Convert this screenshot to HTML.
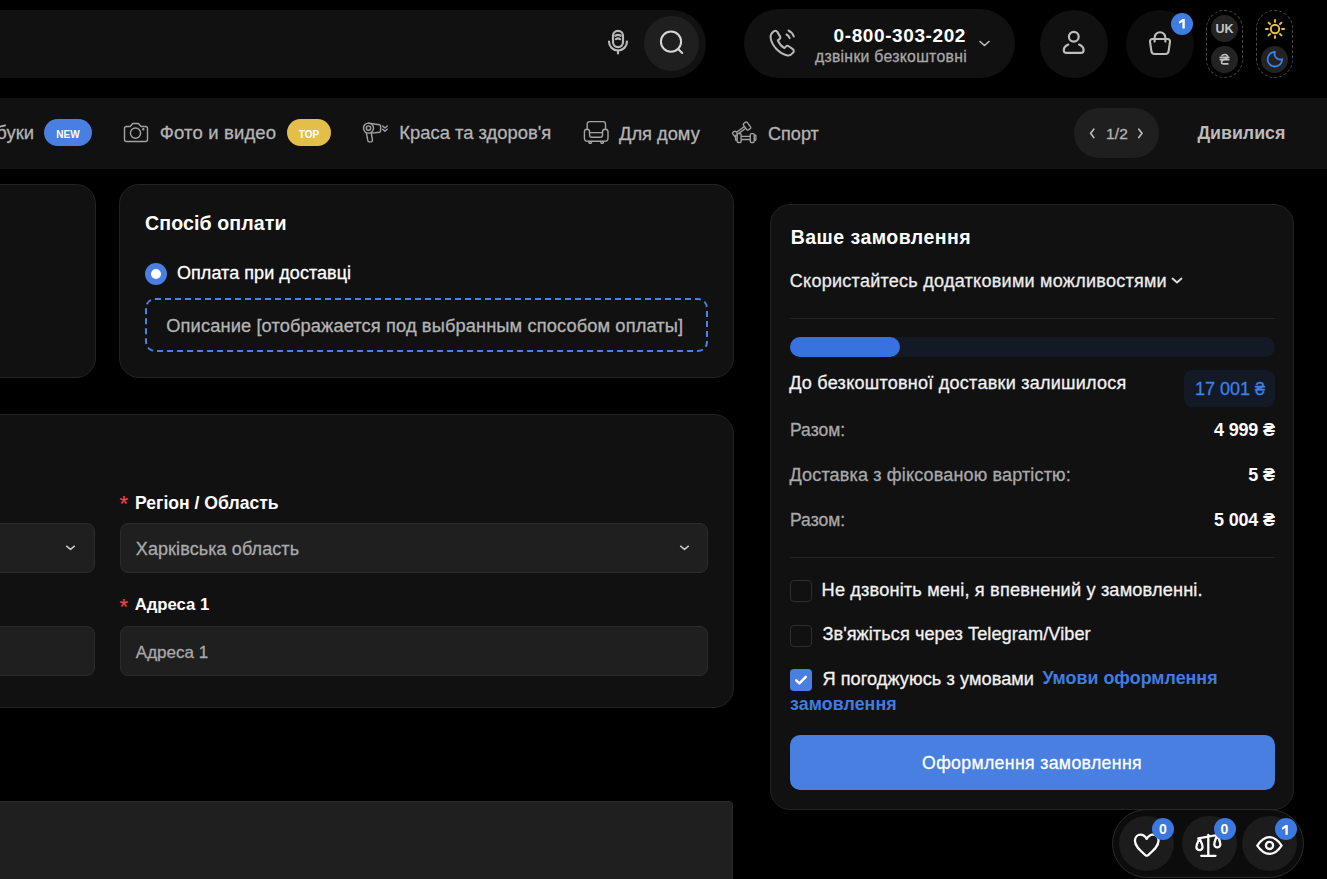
<!DOCTYPE html>
<html><head><meta charset="utf-8"><title>Checkout</title>
<style>
html,body{margin:0;padding:0;background:#000;}
body{width:1327px;height:879px;overflow:hidden;position:relative;font-family:"Liberation Sans", sans-serif;}
</style></head><body>
<div style="position:absolute;left:-300px;top:10px;width:1006px;height:68px;background:#111111;border-radius:34px;box-sizing:border-box;"></div>
<svg style="position:absolute;left:604px;top:27px;" width="28" height="30" viewBox="0 0 28 30" fill="none"><g stroke="#b9b9b9" stroke-width="2.2" stroke-linecap="round">
<rect x="9" y="3.8" width="10" height="16.3" rx="5"/>
<path d="M5 14.5a9 9 0 0 0 18 0"/>
<path d="M14 23.5v3"/>
<path d="M11.3 8.7q2.7-1.6 5.4 0"/>
<path d="M12 12.1q2-1.3 4 0"/></g></svg>
<div style="position:absolute;left:644.0px;top:16.0px;width:55px;height:55px;background:#1f1f1f;border-radius:50%;"></div>
<svg style="position:absolute;left:656px;top:28px;" width="32" height="32" viewBox="0 0 32 32" fill="none"><g stroke="#d6d6d6" stroke-width="2" stroke-linecap="round">
<circle cx="15" cy="13.6" r="10.1"/><path d="M22.6 21.6l3.6 3.4"/></g></svg>
<div style="position:absolute;left:744px;top:9px;width:271px;height:69px;background:#111111;border-radius:34.5px;box-sizing:border-box;"></div>
<svg style="position:absolute;left:768px;top:27.5px;" width="32" height="30" viewBox="0 0 32 30" fill="none"><g stroke="#b9b9b9" stroke-width="2" stroke-linecap="round" stroke-linejoin="round">
<path d="M5.5 3.5c1.5-1 3-.8 3.8.4l2.6 4.2c.6 1 .4 2.3-.5 3l-1.6 1.3c1.2 3 3.6 6 6.6 7.7l1.4-1.5c.8-.9 2.1-1 3-.3l4 2.8c1.2.8 1.3 2.4.3 3.6-1.5 1.8-3.4 3.3-5.6 2.8C11 25.6 3.5 17.3 2.6 9.5c-.3-2.4 1.2-4.6 2.9-6z"/>
<path d="M18.5 6.5c1.6.8 2.6 2 3.2 3.6"/><path d="M20.5 2.5c2.8 1.3 4.4 3.3 5.3 6"/></g></svg>
<div style="position:absolute;right:361px;top:25.5px;font-size:19px;line-height:19px;font-weight:700;color:#ffffff;letter-spacing:0.6px;white-space:nowrap;">0-800-303-202</div>
<div style="position:absolute;right:360px;top:49px;font-size:15.8px;line-height:15.8px;font-weight:400;color:#a8a8a8;letter-spacing:0.28px;white-space:nowrap;-webkit-text-stroke:0.3px #a8a8a8;">дзвінки безкоштовні</div>
<svg style="position:absolute;left:978px;top:39px;" width="13" height="9" viewBox="0 0 13 9" fill="none"><path d="M2 2.5l4.5 4 4.5-4" stroke="#bdbdbd" stroke-width="1.6" stroke-linecap="round" stroke-linejoin="round"/></svg>
<div style="position:absolute;left:1039.5px;top:10.0px;width:68px;height:68px;background:#111111;border-radius:50%;"></div>
<svg style="position:absolute;left:1060px;top:30px;" width="28" height="28" viewBox="0 0 28 28" fill="none"><g stroke="#bdbdbd" stroke-width="2.2" stroke-linecap="round">
<circle cx="13.8" cy="6.8" r="4.9"/>
<path d="M8.3 14.6c-2.8 1.3-4.5 3.3-4.5 5.6 0 1.6 1 2.6 2.6 2.6h14.6c1.6 0 2.6-1 2.6-2.6 0-2.3-1.7-4.3-4.5-5.6"/></g></svg>
<div style="position:absolute;left:1125.5px;top:10.0px;width:68px;height:68px;background:#0d0d0d;border-radius:50%;"></div>
<svg style="position:absolute;left:1146px;top:29px;" width="28" height="28" viewBox="0 0 28 28" fill="none"><g stroke="#bdbdbd" stroke-width="2.1" stroke-linecap="round" stroke-linejoin="round">
<path d="M6.3 10h15.4c1.5 0 2.5 1.3 2.3 2.7l-1.4 9.4c-.2 1.7-1.6 2.9-3.3 2.9H8.7c-1.7 0-3.1-1.2-3.3-2.9L4 12.7C3.8 11.3 4.8 10 6.3 10z"/>
<path d="M8.6 12.6V8.6a5.4 5.4 0 0 1 10.8 0v4"/></g></svg>
<div style="position:absolute;left:1171.0px;top:13.0px;width:22px;height:22px;background:#3f7de0;border-radius:50%;"></div>
<svg style="position:absolute;left:1177.5px;top:18.4px;" width="9" height="11.4" viewBox="0 0 9 11.4" fill="none"><path d="M4.4 1H6.800000000000001V10.4H4.4V3.82L1.5 5.7L0.8 3.82Z" fill="#fff"/></svg>
<div style="position:absolute;left:1206px;top:10px;width:37px;height:68px;background:transparent;border-radius:18.5px;border:1px dashed #4a4a4a;box-sizing:border-box;"></div>
<div style="position:absolute;left:1211.0px;top:15.0px;width:27px;height:27px;background:#232323;border-radius:50%;"></div>
<div style="position:absolute;left:924.5px;width:600px;text-align:center;top:23px;font-size:12.5px;line-height:12.5px;font-weight:700;color:#c4c4c4;letter-spacing:0px;white-space:nowrap;">UK</div>
<div style="position:absolute;left:1211.0px;top:45.5px;width:27px;height:27px;background:#232323;border-radius:50%;"></div>
<svg style="position:absolute;left:1219px;top:53px;" width="11" height="12" viewBox="0 0 11 12" fill="none"><g stroke="#c4c4c4" stroke-width="1.6" stroke-linecap="round" stroke-linejoin="round" fill="none"><path d="M3 2.4Q5.2 1.1 7.2 1.7Q8.9 2.3 8.6 4Q8.2 5.4 5.6 6.3Q2.6 7.3 2.5 9.2Q2.6 10.9 4.8 10.9H8.9"/><path d="M1.2 4.4H9.9M1.2 6.6H9.9"/></g></svg>
<div style="position:absolute;left:1256px;top:10px;width:37px;height:68px;background:transparent;border-radius:18.5px;border:1px dashed #4a4a4a;box-sizing:border-box;"></div>
<svg style="position:absolute;left:1263px;top:17px;" width="24" height="24" viewBox="0 0 24 24" fill="none"><g stroke="#e9c43f" stroke-width="1.9" stroke-linecap="round">
<circle cx="12" cy="12" r="4.2"/>
<path d="M12 2.9v2M12 19.1v2M2.9 12h2M19.1 12h2M5.6 5.6l1.4 1.4M17 17l1.4 1.4M5.6 18.4L7 17M17 7l1.4-1.4"/></g></svg>
<div style="position:absolute;left:1261.0px;top:45.5px;width:27px;height:27px;background:#232323;border-radius:50%;"></div>
<svg style="position:absolute;left:1264px;top:49px;" width="21" height="21" viewBox="0 0 21 21" fill="none"><path d="M10.9 2.9A7.3 7.3 0 1 0 18.2 10.2A5.7 5.7 0 0 1 10.9 2.9Z" stroke="#3b82f0" stroke-width="1.8" stroke-linejoin="round"/></svg>
<div style="position:absolute;left:0px;top:98px;width:1327px;height:71px;background:#111111;border-radius:0px;box-sizing:border-box;"></div>
<div style="position:absolute;right:1293px;top:124px;font-size:18.4px;line-height:18.4px;font-weight:400;color:#b4b4b4;letter-spacing:0px;white-space:nowrap;-webkit-text-stroke:0.3px #b4b4b4;">буки</div>
<div style="position:absolute;left:44px;top:119px;width:48px;height:27px;background:#487fe1;border-radius:13.5px;box-sizing:border-box;"></div>
<div style="position:absolute;left:-232px;width:600px;text-align:center;top:129.5px;font-size:10px;line-height:10px;font-weight:700;color:#fff;letter-spacing:0px;white-space:nowrap;">NEW</div>
<svg style="position:absolute;left:122px;top:120px;" width="28" height="24" viewBox="0 0 28 24" fill="none"><g stroke="#a3a3a3" stroke-width="1.4" stroke-linejoin="round">
<path d="M2.5 8.5a2 2 0 0 1 2-2h3.6l2.7-3h5.6l2.7 3h4.4a2 2 0 0 1 2 2v11a2 2 0 0 1-2 2h-19a2 2 0 0 1-2-2z"/>
<circle cx="13.5" cy="13.1" r="5.1"/><circle cx="21.3" cy="9.2" r=".5" fill="#a3a3a3"/></g></svg>
<div style="position:absolute;left:159.8px;top:124px;font-size:18.5px;line-height:18.5px;font-weight:400;color:#b4b4b4;letter-spacing:0.15px;white-space:nowrap;-webkit-text-stroke:0.3px #b4b4b4;">Фото и видео</div>
<div style="position:absolute;left:287px;top:119px;width:44px;height:27px;background:#e3bf4a;border-radius:13.5px;box-sizing:border-box;"></div>
<div style="position:absolute;left:9px;width:600px;text-align:center;top:129.5px;font-size:10px;line-height:10px;font-weight:700;color:#fff;letter-spacing:0px;white-space:nowrap;">TOP</div>
<svg style="position:absolute;left:361px;top:121px;" width="28" height="23" viewBox="0 0 28 23" fill="none"><g stroke="#a3a3a3" stroke-width="1.4" stroke-linecap="round" stroke-linejoin="round">
<circle cx="7.5" cy="7.1" r="5"/><circle cx="7.5" cy="7.1" r="2.2"/>
<path d="M7.5 2.1L18.4 3.7Q19.6 3.9 19.6 5V10Q19.6 11 18.5 11.2L11 12.1"/>
<path d="M5.3 11.6L6.9 19.8Q7.2 21 8.4 20.9L10.4 20.7Q11.7 20.5 11.5 19.2L10.3 12.3"/>
<path d="M21.6 5L23.9 7L26.2 5M21.6 8.2L23.9 10.2L26.2 8.2"/></g></svg>
<div style="position:absolute;left:399.3px;top:124px;font-size:18.4px;line-height:18.4px;font-weight:400;color:#b4b4b4;letter-spacing:0px;white-space:nowrap;-webkit-text-stroke:0.3px #b4b4b4;">Краса та здоров'я</div>
<svg style="position:absolute;left:582px;top:120px;" width="28" height="25" viewBox="0 0 28 25" fill="none"><g stroke="#a3a3a3" stroke-width="1.4" stroke-linecap="round" stroke-linejoin="round">
<path d="M5.2 8.8V4Q5.2 1.6 7.6 1.6H21.1Q23.5 1.6 23.5 4V8.8"/>
<path d="M5 9.3Q7.6 9.3 7.6 12V15Q7.6 17.3 9.9 17.3H18.2Q20.5 17.3 20.5 15V12Q20.5 9.3 23.2 9.3Q26 9.3 26 12V18Q26 21.3 22.7 21.3H5.7Q2.4 21.3 2.4 18V12Q2.4 9.3 5 9.3Z"/>
<path d="M7.6 12.6H20.5"/>
<path d="M6.6 21.5L7.3 23.3H9.1L9.8 21.5M18.6 21.5L19.3 23.3H21.1L21.8 21.5"/></g></svg>
<div style="position:absolute;left:619px;top:125px;font-size:18.3px;line-height:18.3px;font-weight:400;color:#b4b4b4;letter-spacing:0px;white-space:nowrap;-webkit-text-stroke:0.3px #b4b4b4;">Для дому</div>
<svg style="position:absolute;left:730px;top:120px;" width="30" height="25" viewBox="0 0 30 25" fill="none"><g stroke="#a3a3a3" stroke-width="1.3" stroke-linecap="round" stroke-linejoin="round">
<g transform="translate(11.5 10) rotate(-36)">
<path d="M-5.5 -1.1H4.5M-5.5 1.1H4.5"/>
<rect x="4.5" y="-4" width="4.6" height="8" rx="1.2" fill="#111"/>
<rect x="-9.3" y="-3.1" width="3.8" height="6.2" rx="1" fill="#111"/></g>
<path d="M11.1 16.3H20.3M11.1 19.5H20.3"/>
<rect x="5.6" y="15.2" width="1.8" height="5.2" rx=".6" fill="#111"/>
<rect x="24.1" y="15.2" width="1.8" height="5.2" rx=".6" fill="#111"/>
<rect x="7.2" y="13.7" width="3.9" height="8.8" rx="1" fill="#111"/>
<rect x="20.3" y="13.7" width="3.9" height="8.8" rx="1" fill="#111"/></g></svg>
<div style="position:absolute;left:768px;top:125px;font-size:18.1px;line-height:18.1px;font-weight:400;color:#b4b4b4;letter-spacing:0px;white-space:nowrap;-webkit-text-stroke:0.3px #b4b4b4;">Спорт</div>
<div style="position:absolute;left:1074px;top:108px;width:85px;height:50px;background:#1f1f1f;border-radius:25px;box-sizing:border-box;"></div>
<svg style="position:absolute;left:1086px;top:124px;" width="10" height="16" viewBox="0 0 10 16" fill="none"><path d="M7.8 5.2L4.6 9.3 7.8 13.5" stroke="#b9b9b9" stroke-width="1.7" stroke-linecap="round" stroke-linejoin="round"/></svg>
<div style="position:absolute;left:1106px;top:125.5px;font-size:15.5px;line-height:15.5px;font-weight:400;color:#b4b4b4;letter-spacing:0.2px;white-space:nowrap;-webkit-text-stroke:0.3px #b4b4b4;">1/2</div>
<svg style="position:absolute;left:1134px;top:124px;" width="10" height="16" viewBox="0 0 10 16" fill="none"><path d="M4.8 5.2L8 9.3 4.8 13.5" stroke="#b9b9b9" stroke-width="1.7" stroke-linecap="round" stroke-linejoin="round"/></svg>
<div style="position:absolute;left:1197.4px;top:125px;font-size:17.8px;line-height:17.8px;font-weight:700;color:#bcbcbc;letter-spacing:0px;white-space:nowrap;">Дивилися</div>
<div style="position:absolute;left:-200px;top:184px;width:296px;height:194px;background:#111111;border-radius:20px;border:1px solid #232323;box-sizing:border-box;"></div>
<div style="position:absolute;left:119px;top:184px;width:615px;height:194px;background:#111111;border-radius:20px;border:1px solid #232323;box-sizing:border-box;"></div>
<div style="position:absolute;left:145px;top:214px;font-size:19.6px;line-height:19.6px;font-weight:700;color:#ffffff;letter-spacing:0.1px;white-space:nowrap;">Спосіб оплати</div>
<div style="position:absolute;left:145.0px;top:263.2px;width:22px;height:22px;background:#487fe1;border-radius:50%;"></div>
<div style="position:absolute;left:151.0px;top:269.0px;width:10px;height:10px;background:#ffffff;border-radius:50%;"></div>
<div style="position:absolute;left:177px;top:264px;font-size:18px;line-height:18px;font-weight:400;color:#ffffff;letter-spacing:0.05px;white-space:nowrap;-webkit-text-stroke:0.3px #ffffff;">Оплата при доставці</div>
<div style="position:absolute;left:145px;top:298px;width:563px;height:54px;background:transparent;border-radius:10px;border:2px dashed #4b84e6;box-sizing:border-box;"></div>
<div style="position:absolute;left:166.3px;top:317px;font-size:18.3px;line-height:18.3px;font-weight:400;color:#b4b4b4;letter-spacing:0.1px;white-space:nowrap;-webkit-text-stroke:0.3px #b4b4b4;">Описание [отображается под выбранным способом оплаты]</div>
<div style="position:absolute;left:-200px;top:414px;width:934px;height:294px;background:#111111;border-radius:20px;border:1px solid #232323;box-sizing:border-box;"></div>
<div style="position:absolute;left:119.5px;top:493px;font-size:22px;line-height:22px;font-weight:400;color:#ef4444;letter-spacing:0px;white-space:nowrap;-webkit-text-stroke:0.2px #ef4444;">*</div>
<div style="position:absolute;left:135px;top:495px;font-size:17.6px;line-height:17.6px;font-weight:700;color:#ffffff;letter-spacing:0px;white-space:nowrap;">Регіон / Область</div>
<div style="position:absolute;left:-200px;top:523px;width:295px;height:50px;background:#1f1f1f;border-radius:8px;border:1px solid #2b2b2b;box-sizing:border-box;"></div>
<svg style="position:absolute;left:64px;top:543px;" width="13" height="9" viewBox="0 0 13 9" fill="none"><path d="M2.6 3.2l3.9 3.2 3.9-3.2" stroke="#c9c9c9" stroke-width="1.5" stroke-linecap="round" stroke-linejoin="round"/></svg>
<div style="position:absolute;left:120px;top:523px;width:588px;height:50px;background:#1f1f1f;border-radius:8px;border:1px solid #2b2b2b;box-sizing:border-box;"></div>
<div style="position:absolute;left:135.8px;top:540px;font-size:18px;line-height:18px;font-weight:400;color:#a9a9a9;letter-spacing:0.1px;white-space:nowrap;-webkit-text-stroke:0.3px #a9a9a9;">Харківська область</div>
<svg style="position:absolute;left:678px;top:543px;" width="13" height="9" viewBox="0 0 13 9" fill="none"><path d="M2.6 3.2l3.9 3.2 3.9-3.2" stroke="#c9c9c9" stroke-width="1.5" stroke-linecap="round" stroke-linejoin="round"/></svg>
<div style="position:absolute;left:119.5px;top:596px;font-size:22px;line-height:22px;font-weight:400;color:#ef4444;letter-spacing:0px;white-space:nowrap;-webkit-text-stroke:0.2px #ef4444;">*</div>
<div style="position:absolute;left:134.7px;top:597px;font-size:16.7px;line-height:16.7px;font-weight:700;color:#ffffff;letter-spacing:0px;white-space:nowrap;">Адреса 1</div>
<div style="position:absolute;left:-200px;top:626px;width:295px;height:50px;background:#1f1f1f;border-radius:8px;border:1px solid #2b2b2b;box-sizing:border-box;"></div>
<div style="position:absolute;left:120px;top:626px;width:588px;height:50px;background:#1f1f1f;border-radius:8px;border:1px solid #2b2b2b;box-sizing:border-box;"></div>
<div style="position:absolute;left:135.8px;top:643.5px;font-size:17px;line-height:17px;font-weight:400;color:#a9a9a9;letter-spacing:0px;white-space:nowrap;-webkit-text-stroke:0.3px #a9a9a9;">Адреса 1</div>
<div style="position:absolute;left:-200px;top:801px;width:933px;height:200px;background:#1f1f1f;border-radius:4px;border:1px solid #2b2b2b;box-sizing:border-box;"></div>
<div style="position:absolute;left:770px;top:204px;width:524px;height:605.5px;background:#111111;border-radius:20px;border:1px solid #232323;box-sizing:border-box;"></div>
<div style="position:absolute;left:790.8px;top:228px;font-size:19.5px;line-height:19.5px;font-weight:700;color:#ffffff;letter-spacing:0.45px;white-space:nowrap;">Ваше замовлення</div>
<div style="position:absolute;left:789.8px;top:271.5px;font-size:18px;line-height:18px;font-weight:400;color:#ececec;letter-spacing:0.27px;white-space:nowrap;-webkit-text-stroke:0.3px #ececec;">Скористайтесь додатковими можливостями</div>
<svg style="position:absolute;left:1169px;top:274px;" width="16" height="12" viewBox="0 0 16 12" fill="none"><path d="M3.5 4.5l4.5 4 4.5-4" stroke="#e0e0e0" stroke-width="1.8" stroke-linecap="round" stroke-linejoin="round"/></svg>
<div style="position:absolute;left:790px;top:318px;width:485px;height:1px;background:#242424;border-radius:0px;box-sizing:border-box;"></div>
<div style="position:absolute;left:790px;top:337px;width:485px;height:20px;background:#131a26;border-radius:10px;box-sizing:border-box;"></div>
<div style="position:absolute;left:790px;top:337px;width:110px;height:20px;background:#3872e0;border-radius:10px;box-sizing:border-box;"></div>
<div style="position:absolute;left:789.2px;top:374px;font-size:18px;line-height:18px;font-weight:400;color:#f2f2f2;letter-spacing:0.26px;white-space:nowrap;-webkit-text-stroke:0.3px #f2f2f2;">До безкоштовної доставки залишилося</div>
<div style="position:absolute;left:1184px;top:370px;width:91px;height:36.5px;background:#131a26;border-radius:8px;box-sizing:border-box;"></div>
<div style="position:absolute;right:62px;top:380px;font-size:18px;line-height:18px;font-weight:400;color:#3d7fe6;letter-spacing:0px;white-space:nowrap;-webkit-text-stroke:0.3px #3d7fe6;">17 001 ₴</div>
<div style="position:absolute;left:790px;top:421.5px;font-size:17.5px;line-height:17.5px;font-weight:400;color:#a9a9a9;letter-spacing:0px;white-space:nowrap;-webkit-text-stroke:0.3px #a9a9a9;">Разом:</div>
<div style="position:absolute;right:52.299999999999955px;top:421px;font-size:18px;line-height:18px;font-weight:700;color:#ffffff;letter-spacing:-0.2px;white-space:nowrap;">4 999 ₴</div>
<div style="position:absolute;left:789.5px;top:466px;font-size:18px;line-height:18px;font-weight:400;color:#a9a9a9;letter-spacing:0.16px;white-space:nowrap;-webkit-text-stroke:0.3px #a9a9a9;">Доставка з фіксованою вартістю:</div>
<div style="position:absolute;right:52.299999999999955px;top:466px;font-size:18px;line-height:18px;font-weight:700;color:#ffffff;letter-spacing:-0.2px;white-space:nowrap;">5 ₴</div>
<div style="position:absolute;left:790px;top:512px;font-size:17.5px;line-height:17.5px;font-weight:400;color:#a9a9a9;letter-spacing:0px;white-space:nowrap;-webkit-text-stroke:0.3px #a9a9a9;">Разом:</div>
<div style="position:absolute;right:52.299999999999955px;top:511px;font-size:18px;line-height:18px;font-weight:700;color:#ffffff;letter-spacing:-0.2px;white-space:nowrap;">5 004 ₴</div>
<div style="position:absolute;left:790px;top:557px;width:485px;height:1px;background:#242424;border-radius:0px;box-sizing:border-box;"></div>
<div style="position:absolute;left:790px;top:580px;width:22px;height:22px;background:transparent;border-radius:4px;border:1px solid #2e2e2e;box-sizing:border-box;"></div>
<div style="position:absolute;left:821.6px;top:581px;font-size:18.2px;line-height:18.2px;font-weight:400;color:#f2f2f2;letter-spacing:0.15px;white-space:nowrap;-webkit-text-stroke:0.3px #f2f2f2;">Не дзвоніть мені, я впевнений у замовленні.</div>
<div style="position:absolute;left:790px;top:624.5px;width:22px;height:22px;background:transparent;border-radius:4px;border:1px solid #2e2e2e;box-sizing:border-box;"></div>
<div style="position:absolute;left:822.4px;top:625px;font-size:18.2px;line-height:18.2px;font-weight:400;color:#f2f2f2;letter-spacing:0.05px;white-space:nowrap;-webkit-text-stroke:0.3px #f2f2f2;">Зв'яжіться через Telegram/Viber</div>
<div style="position:absolute;left:790px;top:669px;width:22px;height:22px;background:#487fe1;border-radius:4px;box-sizing:border-box;"></div>
<svg style="position:absolute;left:790px;top:669px;" width="22" height="22" viewBox="0 0 22 22" fill="none"><path d="M6.2 11.3l3.2 3.1 6.4-6.6" stroke="#fff" stroke-width="2.4" stroke-linecap="round" stroke-linejoin="round"/></svg>
<div style="position:absolute;left:822.4px;top:670px;font-size:18.2px;line-height:18.2px;font-weight:400;color:#f2f2f2;letter-spacing:0.05px;white-space:nowrap;-webkit-text-stroke:0.3px #f2f2f2;">Я погоджуюсь з умовами</div>
<div style="position:absolute;left:1042.4px;top:670px;font-size:17.8px;line-height:17.8px;font-weight:700;color:#3f7de3;letter-spacing:0.05px;white-space:nowrap;">Умови оформлення</div>
<div style="position:absolute;left:790px;top:696px;font-size:17.8px;line-height:17.8px;font-weight:700;color:#3f7de3;letter-spacing:0.1px;white-space:nowrap;">замовлення</div>
<div style="position:absolute;left:790px;top:735px;width:485px;height:55px;background:#487fe1;border-radius:10px;box-sizing:border-box;"></div>
<div style="position:absolute;left:732px;width:600px;text-align:center;top:754.5px;font-size:17.7px;line-height:17.7px;font-weight:400;color:#ffffff;letter-spacing:0.35px;white-space:nowrap;-webkit-text-stroke:0.3px #ffffff;">Оформлення замовлення</div>
<div style="position:absolute;left:1112px;top:809px;width:192px;height:69px;background:#0c0c0c;border-radius:34.5px;border:1px solid #2a2a2a;box-sizing:border-box;"></div>
<div style="position:absolute;left:1119.0px;top:816.0px;width:55px;height:55px;background:#1c1c1c;border-radius:50%;"></div>
<div style="position:absolute;left:1181.5px;top:816.0px;width:55px;height:55px;background:#1c1c1c;border-radius:50%;"></div>
<div style="position:absolute;left:1242.0px;top:816.0px;width:55px;height:55px;background:#1c1c1c;border-radius:50%;"></div>
<svg style="position:absolute;left:1131px;top:831px;" width="32" height="28" viewBox="0 0 32 28" fill="none"><path d="M15.75 7.9C14.2 5.2 12.1 3.65 9.6 3.65 6.3 3.65 3.95 6.3 3.95 9.8 3.95 15.5 9.5 20 14.4 24.1Q15.75 25.2 17.1 24.1C22 20 27.55 15.5 27.55 9.8 27.55 6.3 25.2 3.65 21.9 3.65 19.4 3.65 17.3 5.2 15.75 7.9Z" stroke="#fff" stroke-width="2.3" stroke-linejoin="round"/></svg>
<svg style="position:absolute;left:1193px;top:831px;" width="32" height="28" viewBox="0 0 32 28" fill="none"><g stroke="#fff" stroke-width="2.3" stroke-linecap="round" stroke-linejoin="round">
<path d="M15.3 3.9V24.8M8.2 24.8H22.5M5.3 7.4L25.3 3.8"/>
<path d="M6.5 7.3C5.6 9.5 3.4 13 3.4 16.1A3.1 3.1 0 0 0 9.6 16.1C9.6 13 7.4 9.5 6.5 7.3Z"/>
<path d="M24.3 4C23.4 6.2 21.3 10.5 21.3 13.4A3 3 0 0 0 27.3 13.4C27.3 10.5 25.2 6.2 24.3 4Z"/></g></svg>
<svg style="position:absolute;left:1254px;top:833px;" width="31" height="24" viewBox="0 0 31 24" fill="none"><g stroke="#fff" stroke-width="2.3" stroke-linecap="round" stroke-linejoin="round">
<path d="M3.3 12.6Q9 4.2 15.45 4.2Q21.9 4.2 27.6 12.6Q21.9 20.9 15.45 20.9Q9 20.9 3.3 12.6Z"/>
<circle cx="15.5" cy="12.4" r="3.6"/></g></svg>
<div style="position:absolute;left:1152.0px;top:818.0px;width:22px;height:22px;background:#3b78e0;border-radius:50%;"></div>
<div style="position:absolute;left:863px;width:600px;text-align:center;top:822px;font-size:14px;line-height:14px;font-weight:700;color:#fff;letter-spacing:0px;white-space:nowrap;">0</div>
<div style="position:absolute;left:1213.5px;top:818.0px;width:22px;height:22px;background:#3b78e0;border-radius:50%;"></div>
<div style="position:absolute;left:924.5px;width:600px;text-align:center;top:822px;font-size:14px;line-height:14px;font-weight:700;color:#fff;letter-spacing:0px;white-space:nowrap;">0</div>
<div style="position:absolute;left:1274.5px;top:818.0px;width:22px;height:22px;background:#3b78e0;border-radius:50%;"></div>
<svg style="position:absolute;left:1281.0px;top:823.8px;" width="9" height="11.7" viewBox="0 0 9 11.7" fill="none"><path d="M4.4 1H6.800000000000001V10.7H4.4V3.9099999999999997L1.5 5.85L0.8 3.9099999999999997Z" fill="#fff"/></svg>
</body></html>
